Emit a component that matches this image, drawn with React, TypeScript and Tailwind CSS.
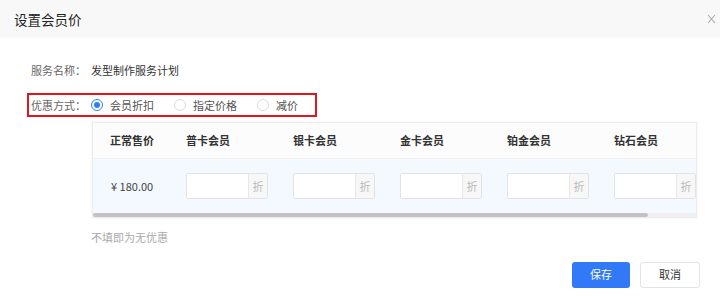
import React, { useState } from 'react';

const levels = ['普卡会员', '银卡会员', '金卡会员', '铂金会员', '钻石会员'];
const modes = ['会员折扣', '指定价格', '减价'];

function Radio({ checked, label, onClick }: { checked: boolean; label: string; onClick: () => void }) {
  return (
    <button type="button" onClick={onClick} className="flex shrink-0 items-center gap-[7px] mr-[20px] whitespace-nowrap">
      <span
        className={
          checked
            ? 'w-[12px] h-[12px] rounded-full border border-[#2d7ff9] flex items-center justify-center bg-white'
            : 'w-[12px] h-[12px] rounded-full border border-[#dcdcdc] bg-white'
        }
      >
        {checked && <span className="w-[6px] h-[6px] rounded-full bg-[#2d7ff9]" />}
      </span>
      <span className="text-[#555]">{label}</span>
    </button>
  );
}

export default function App() {
  const [mode, setMode] = useState(0);

  return (
    <div
      className="w-[720px] h-[301px] bg-white text-[11px] text-[#333] overflow-hidden"
      style={{ fontFamily: '"Noto Sans CJK SC", "Noto Sans", sans-serif' }}
    >
      <div className="h-[38px] bg-[#f8f8f8] flex items-center justify-between pl-[14px] pr-[4px]">
        <span className="text-[13.5px] text-[#222]">设置会员价</span>
        <svg width="9" height="10" viewBox="0 0 9 10" className="text-[#aaa]">
          <path d="M1 1 L8 9 M8 1 L1 9" stroke="currentColor" strokeWidth="1.1" fill="none" />
        </svg>
      </div>

      <div className="pl-[27px]">
        <div className="mt-[22px] h-[20px] flex items-center pl-[4px]">
          <span className="w-[60px] text-[#666]">服务名称：</span>
          <span className="text-[#333]">发型制作服务计划</span>
        </div>

        <div className="mt-[13px] w-[290px] h-[24px] border-2 border-[#e2141c] flex items-center pl-[2px] whitespace-nowrap">
          <span className="w-[60px] shrink-0 text-[#666]">优惠方式：</span>
          {modes.map((m, i) => (
            <Radio key={m} checked={mode === i} label={m} onClick={() => setMode(i)} />
          ))}
        </div>

        <div className="mt-[5px] ml-[65px] w-[605px] border border-[#ececec] shadow-[0_0_2px_rgba(0,0,0,0.08)] overflow-hidden">
          <div className="flex h-[36px] items-center bg-[#fcfcfc] border-b border-[#f0f0f0] font-bold text-[#333]">
            <div className="w-[75px] shrink-0 pl-[17px]">正常售价</div>
            {levels.map((l) => (
              <div key={l} className="w-[107px] shrink-0 pl-[18px]">{l}</div>
            ))}
          </div>
          <div className="flex h-[54px] items-center bg-[#f4f8ff]">
            <div className="w-[75px] shrink-0 pl-[18px] text-[#444]">¥ 180.00</div>
            {levels.map((l) => (
              <div key={l} className="w-[107px] shrink-0 pl-[18px]">
                <div className="flex w-[82px] h-[26px] border border-[#e3e3e3] rounded-[2px] bg-white overflow-hidden">
                  <input className="w-[61px] outline-none px-[4px] bg-white" />
                  <span className="w-[21px] border-l border-[#e8e8e8] bg-[#f7f7f7] text-[#bbb] flex items-center justify-center">折</span>
                </div>
              </div>
            ))}
          </div>
          <div className="h-[4px] bg-[#f0f0f0]">
            <div className="h-full w-[555px] bg-[#c2c2c2] rounded-[2px]" />
          </div>
        </div>

        <div className="mt-[11px] pl-[64px] text-[#aaa]">不填即为无优惠</div>
      </div>

      <div className="mt-[16px] flex justify-end gap-[10px] pr-[20px]">
        <button className="w-[58px] h-[26px] rounded-[3px] bg-[#3279f8] text-white">保存</button>
        <button className="w-[60px] h-[26px] rounded-[3px] border border-[#e3e3e3] bg-white text-[#333]">取消</button>
      </div>
    </div>
  );
}
